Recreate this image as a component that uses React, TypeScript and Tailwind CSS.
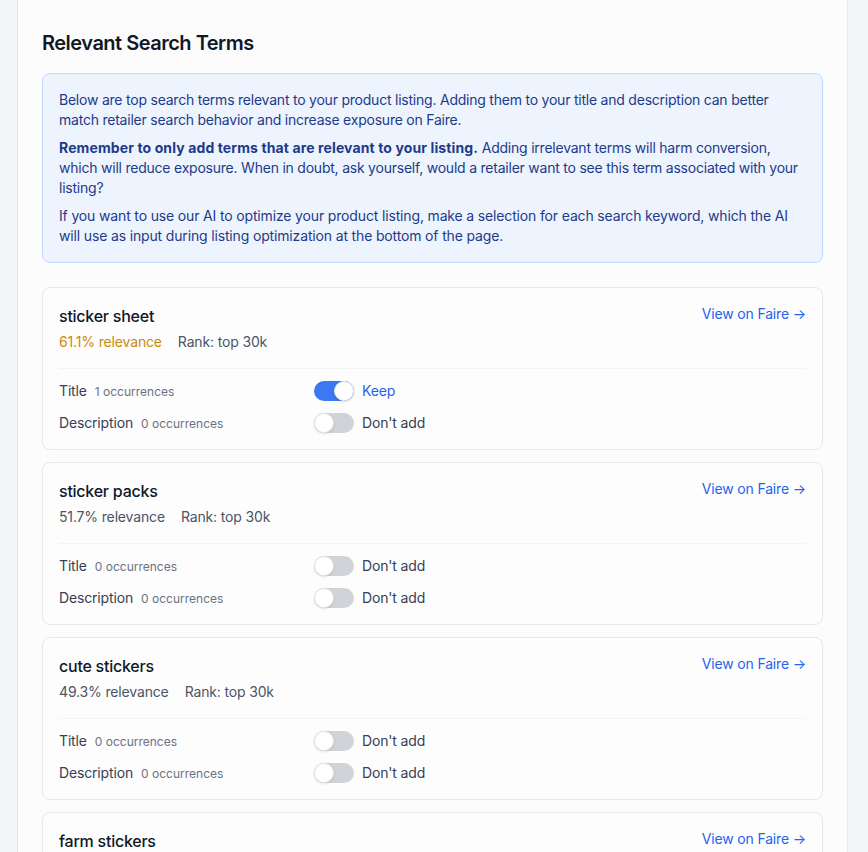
import { useState } from 'react'

type Term = {
  term: string
  relevance: string
  high?: boolean
  rank: string
  title: { count: number; on: boolean }
  description: { count: number; on: boolean }
}

const TERMS: Term[] = [
  { term: 'sticker sheet', relevance: '61.1%', high: true, rank: 'top 30k', title: { count: 1, on: true }, description: { count: 0, on: false } },
  { term: 'sticker packs', relevance: '51.7%', rank: 'top 30k', title: { count: 0, on: false }, description: { count: 0, on: false } },
  { term: 'cute stickers', relevance: '49.3%', rank: 'top 30k', title: { count: 0, on: false }, description: { count: 0, on: false } },
  { term: 'farm stickers', relevance: '47.8%', rank: 'top 30k', title: { count: 0, on: false }, description: { count: 0, on: false } },
]

function Toggle({ on, existing, onChange }: { on: boolean; existing: boolean; onChange: () => void }) {
  return (
    <button type="button" onClick={onChange} className="flex items-center gap-2">
      <span
        className={`relative inline-flex h-5 w-10 shrink-0 rounded-full transition ${
          on ? 'bg-[#3b78f2]' : 'bg-[#d1d3d8]'
        }`}
      >
        <span
          className={`absolute top-0 h-5 w-5 rounded-full border border-gray-200 bg-white shadow transition ${
            on ? 'left-5' : 'left-0'
          }`}
        />
      </span>
      <span className={`text-sm tracking-[-0.011em] ${on ? 'text-[#2563eb]' : 'text-gray-700'}`}>
        {on ? (existing ? 'Keep' : 'Add') : "Don't add"}
      </span>
    </button>
  )
}

function TermRow({ label, count, on, onChange }: { label: string; count: number; on: boolean; onChange: () => void }) {
  return (
    <div className="flex h-5 items-center">
      <div className="flex w-[255px] items-baseline gap-2">
        <span className="text-sm tracking-[-0.011em] text-gray-700">{label}</span>
        <span className="text-xs text-gray-500">{count} occurrences</span>
      </div>
      <Toggle on={on} existing={count > 0} onChange={onChange} />
    </div>
  )
}

function TermCard({ data }: { data: Term }) {
  const [title, setTitle] = useState(data.title.on)
  const [desc, setDesc] = useState(data.description.on)

  return (
    <div className="rounded-lg border border-gray-200 bg-[#fdfdfe] p-4">
      <div className="flex items-start justify-between">
        <div>
          <h3 className="text-base font-medium tracking-[-0.015em] text-gray-900">{data.term}</h3>
          <div className="mt-1 flex gap-4 text-sm tracking-[-0.011em]">
            <span className={data.high ? 'text-[#c98a0c]' : 'text-gray-600'}>{data.relevance} relevance</span>
            <span className="text-gray-600">Rank: {data.rank}</span>
          </div>
        </div>
        <a href="#" className="text-sm tracking-[-0.011em] text-[#2563eb]">
          View on Faire →
        </a>
      </div>
      <div className="mt-4 space-y-3 border-t border-gray-100 pt-3">
        <TermRow label="Title" count={data.title.count} on={title} onChange={() => setTitle(!title)} />
        <TermRow label="Description" count={data.description.count} on={desc} onChange={() => setDesc(!desc)} />
      </div>
    </div>
  )
}

export default function App() {
  return (
    <div className="min-h-screen bg-[#f4f5f7] pl-[17px] pr-[20px] font-['Inter',sans-serif]">
      <div className="min-h-screen border-x border-gray-200 bg-[#fcfcfd] px-6 pt-[29px] pb-8">
        <h2 className="mb-4 text-xl font-semibold tracking-[-0.025em] text-gray-900">Relevant Search Terms</h2>

        <div className="space-y-2 rounded-lg border border-[#bfd8fb] bg-[#edf4fe] p-4 text-sm tracking-[-0.016em] text-[#1e3a8a]">
          <p>
            Below are top search terms relevant to your product listing. Adding them to your title and description
            can better match retailer search behavior and increase exposure on Faire.
          </p>
          <p>
            <strong className="font-bold tracking-[0.008em]">
              Remember to only add terms that are relevant to your listing.
            </strong>{' '}
            Adding irrelevant terms will harm conversion, which will reduce exposure. When in doubt, ask yourself,
            would a retailer want to see this term associated with your listing?
          </p>
          <p className="tracking-[-0.011em]">
            If you want to use our AI to optimize your product listing, make a selection for each search keyword,
            which the AI will use as input during listing optimization at the bottom of the page.
          </p>
        </div>

        <div className="mt-6 space-y-3">
          {TERMS.map((t) => (
            <TermCard key={t.term} data={t} />
          ))}
        </div>
      </div>
    </div>
  )
}
